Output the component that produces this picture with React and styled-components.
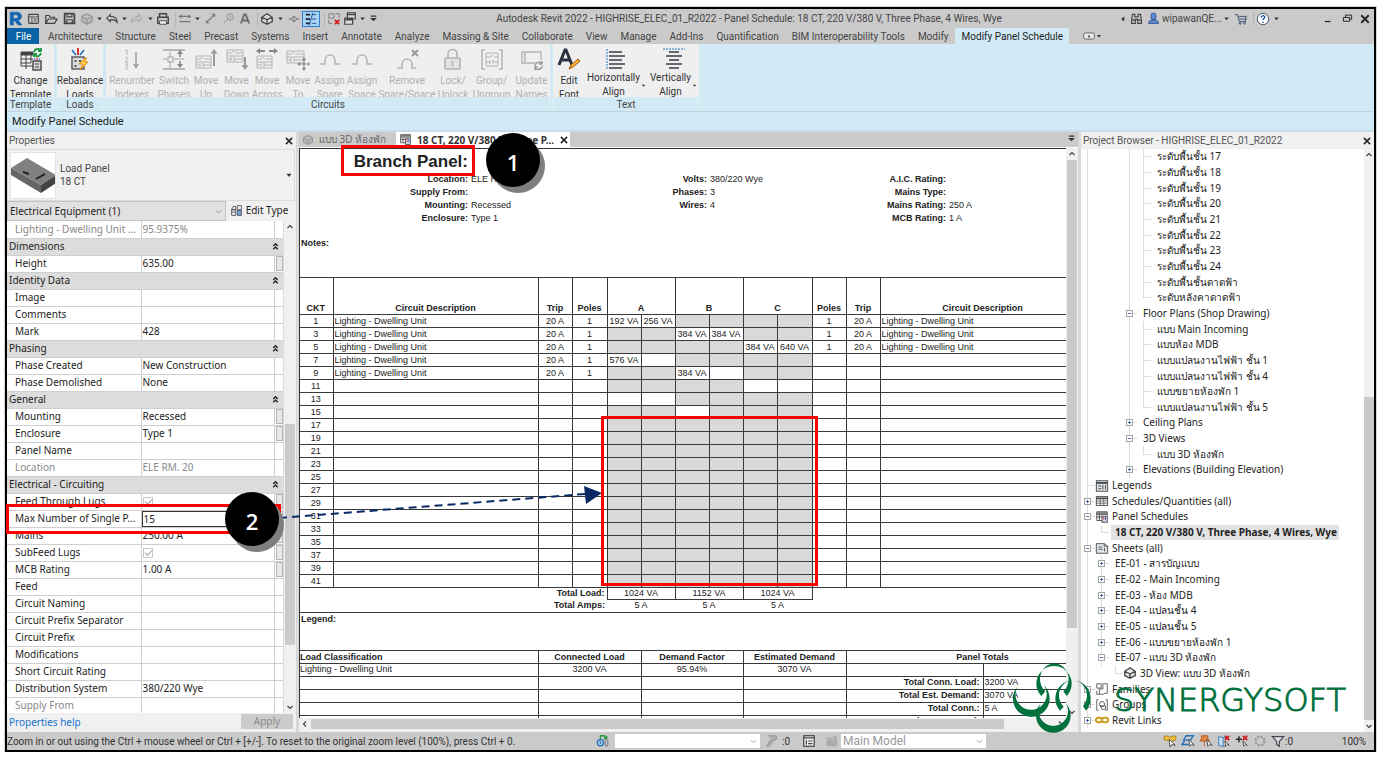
import { useState } from "react";
import styled, { createGlobalStyle } from "styled-components";

const uiFont = `"Noto Sans", "Open Sans", sans-serif`;
const chromeFont = `Roboto, "Noto Sans", sans-serif`;
const sheetFont = `"Liberation Sans", Arial, sans-serif`;

const GlobalStyle = createGlobalStyle`
  * {
    box-sizing: border-box;
  }
  body {
    margin: 0;
    background-color: #fff;
    font-family: ${uiFont};
    font-size: 10px;
    color: #222;
  }
  button, input, select {
    font: inherit;
    color: inherit;
    margin: 0;
    padding: 0;
    border: 0;
    background: none;
    border-radius: 0;
  }
  table {
    border-collapse: collapse;
    border-spacing: 0;
  }
  svg {
    flex: none;
  }
`;

const Frame = styled.div`
  position: relative;
  height: calc(100vh - 15px);
  margin: 7px 10px 0 5px;
  border: 2px solid #000;
  box-shadow: 0 0 0 1px #d4d4d4;
  display: flex;
  flex-direction: column;
  background-color: #f0f0f0;
`;

/* title bar */

const TitleBar = styled.header`
  height: 19px;
  display: flex;
  align-items: center;
  background-color: #cacaca;
  color: #444;
  font-family: ${chromeFont};
`;

const Slot = styled.button`
  width: ${(props) => props.$w}px;
  height: 17px;
  display: flex;
  align-items: center;
  justify-content: center;
  ${(props) =>
    props.$active &&
    "background-color: #a9d3f5; border: 1px solid #2f7fd0; height: 16px;"}
`;

const Separator = styled.span`
  width: 5px;
  height: 14px;
  border-right: 1px solid #b4b4b4;
`;

const WindowTitle = styled.div`
  flex: 1;
  text-align: center;
  white-space: nowrap;
  overflow: hidden;
`;

const UserName = styled.span`
  width: 58px;
  font-size: 10px;
`;

const TitleRight = styled.div`
  display: flex;
  align-items: center;
`;

const WindowButtons = styled.div`
  display: flex;
  margin-left: 38px;
`;

/* ribbon */

const TabRow = styled.nav`
  height: 16px;
  display: flex;
  background-color: #cacaca;
  color: #444;
  font-family: ${chromeFont};
`;

const RibbonTab = styled.button`
  height: 16px;
  padding: 0 6px 0 7px;
  line-height: 17px;
  white-space: nowrap;
  ${(props) => props.$active && "background-color: #d1eaf6; color: #222;"}
`;

const FileTab = styled(RibbonTab)`
  width: 32px;
  margin-right: 2px;
  background-color: #0a63a6;
  color: #fff;
`;

const MiniTab = styled(RibbonTab)`
  padding: 0 14px;
  display: flex;
  align-items: center;
`;

const Ribbon = styled.div`
  height: 68px;
  display: flex;
  gap: 3px;
  background-color: #d1eaf6;
  border-bottom: 1px solid #c4d3da;
  font-family: ${chromeFont};
`;

const Group = styled.section`
  display: flex;
  flex-direction: column;
`;

const GroupButtons = styled.div`
  height: 53px;
  display: flex;
  background-color: #efefef;
  overflow: hidden;
`;

const GroupTitle = styled.div`
  height: 14px;
  line-height: 16px;
  text-align: center;
  color: #444;
  border-left: 1px solid #dfeff6;
  border-right: 1px solid #dfeff6;
`;

const RibbonBtn = styled.button`
  width: ${(props) => props.$w}px;
  display: flex;
  flex-direction: column;
  align-items: center;
  padding-top: 3px;
  color: ${(props) => (props.$off ? "#b0b0b0" : "#333")};
`;

const LabelRow = styled.span`
  display: flex;
  align-items: center;
  margin-top: ${(props) => (props.$high ? 0 : 3)}px;
`;

const BtnLabel = styled.span`
  display: block;
  line-height: 14px;
  white-space: pre;
  text-align: center;
`;

const ContextBar = styled.div`
  height: 20px;
  padding-left: 5px;
  line-height: 20px;
  font-family: ${chromeFont};
  font-size: 11px;
  background-color: #d1eaf6;
  border-bottom: 2px solid #c6dde8;
`;

/* work area */

const Work = styled.main`
  flex: 1;
  min-height: 0;
  display: flex;
  background-color: #d8d8d8;
`;

const PropertiesPanel = styled.aside`
  width: 289px;
  display: flex;
  flex-direction: column;
  background-color: #f0f0f0;
`;

const PanelHeader = styled.div`
  height: 17px;
  padding: 0 2px;
  display: flex;
  align-items: center;
  justify-content: space-between;
  background-color: #f0f0f0;
  color: #555;
  font-family: ${chromeFont};
`;

const CloseBtn = styled.button`
  width: 10px;
  height: 10px;
  display: flex;
  align-items: center;
  justify-content: center;
`;

const TypeBox = styled.div`
  height: 52px;
  margin-right: 1px;
  padding: 1px 0 1px 2px;
  display: flex;
  align-items: center;
  border: 1px solid #dcdcdc;
  color: #444;
  font-family: ${chromeFont};
`;

const Preview = styled.div`
  width: 46px;
  height: 47px;
  margin-right: 4px;
  background-color: #fff;
  border: 1px solid #e4e4e4;
`;

const TypeNames = styled.div`
  flex: 1;
  line-height: 13px;
`;

const FilterRow = styled.div`
  height: 20px;
  display: flex;
`;

const SelectBox = styled.label`
  position: relative;
  display: flex;
  align-items: center;
  width: ${(props) => props.$w}px;
  height: ${(props) => props.$h}px;
  background-color: ${(props) => props.$bg};
  border: ${(props) => (props.$border ? "1px solid #c4c4c4" : "0")};
  color: ${(props) => props.$color || "#222"};
  select {
    width: 100%;
    height: 100%;
    padding-left: 2px;
    appearance: none;
    font-size: ${(props) => props.$size || 10}px;
  }
  svg {
    position: absolute;
    right: 3px;
    pointer-events: none;
  }
`;

const EditType = styled.button`
  flex: 1;
  display: flex;
  align-items: center;
  justify-content: center;
  gap: 3px;
  padding: 0 4px 2px 0;
  font-size: 10px;
`;

const PropertyArea = styled.div`
  flex: 1;
  min-height: 0;
  display: flex;
`;

const PropertyScroll = styled.div`
  flex: 1;
  overflow: hidden;
  background-color: #fff;
  border-right: 1px solid #dcdcdc;
`;

const PropertyTable = styled.table`
  width: 100%;
  table-layout: fixed;
  tr {
    height: 17px;
  }
  td,
  th {
    padding: 0;
    height: 17px;
    line-height: 15px;
    font-weight: 400;
    text-align: left;
    white-space: nowrap;
    overflow: hidden;
    border-bottom: 1px solid #cfcfcf;
  }
`;

const GroupCell = styled.th`
  background-color: #dcdcdc;
  button {
    width: 100%;
    padding: 0 3px 0 2px;
    display: flex;
    align-items: center;
    justify-content: space-between;
  }
`;

const NameCell = styled.th`
  && {
    padding-left: 8px;
    border-right: 1px solid #cfcfcf;
    color: ${(props) => (props.$off ? "#888" : "#222")};
  }
`;

const ValueCell = styled.td`
  && {
    padding-left: 1px;
    border-right: 1px solid #cfcfcf;
    color: ${(props) => (props.$off ? "#888" : "#222")};
  }
`;

const ValueInput = styled.input`
  display: block;
  width: 100%;
  height: 16px;
  margin-left: -1px;
  padding-left: 1px;
  border: 1px solid #333;
`;

const Tick = styled.input`
  display: block;
  appearance: none;
  width: 10px;
  height: 10px;
  border: 1px solid #c8c8c8;
  &::after {
    content: "";
    display: block;
    width: 6px;
    height: 3px;
    margin: 1px;
    border: solid #aaa;
    border-width: 0 0 1px 1px;
    transform: rotate(-45deg);
  }
`;

const AssociateBtn = styled.button`
  display: block;
  width: 7px;
  height: 15px;
  margin-left: 1px;
  background-color: #e8e8e8;
  border: 1px solid #b4b4b4;
`;

const PropertyFooter = styled.div`
  height: 19px;
  padding: 0 3px 2px 2px;
  display: flex;
  align-items: center;
  justify-content: space-between;
  a {
    color: #1a72cf;
    text-decoration: none;
  }
  button {
    width: 52px;
    height: 15px;
    line-height: 15px;
    background-color: #cccccc;
    color: #8a8a8a;
  }
`;

const VScroll = styled.div`
  width: ${(props) => props.$w}px;
  display: flex;
  flex-direction: column;
  align-items: center;
  background-color: #f0f0f0;
`;

const HScroll = styled.div`
  height: 14px;
  padding: 0 12px 2px 0;
  display: flex;
  align-items: center;
  background-color: #f0f0f0;
`;

const Arrow = styled.button`
  width: 12px;
  height: 12px;
  flex: none;
  display: flex;
  align-items: center;
  justify-content: center;
`;

const Track = styled.div`
  flex: ${(props) => props.$part} 0 0;
  align-self: stretch;
  margin: ${(props) => props.$margin || 0};
  background-color: ${(props) => (props.$thumb ? "#cacaca" : "#f0f0f0")};
`;

/* schedule view */

const View = styled.section`
  flex: 1;
  min-width: 0;
  margin: 0 3px;
  display: flex;
  flex-direction: column;
  background-color: #f0f0f0;
`;

const DocTabs = styled.div`
  height: 16px;
  display: flex;
  background-color: #cacaca;
  border-bottom: 1px solid #fff;
`;

const DocTab = styled.button`
  width: ${(props) => props.$w}px;
  padding: 0 3px;
  display: flex;
  align-items: center;
  gap: 5px;
  white-space: nowrap;
  color: ${(props) => (props.$active ? "#333" : "#666")};
  font-weight: ${(props) => (props.$active ? 700 : 400)};
  background-color: ${(props) => (props.$active ? "#fff" : "transparent")};
`;

const DocMenu = styled.button`
  width: 14px;
  margin-left: auto;
`;

const SheetRow = styled.div`
  flex: 1;
  min-height: 0;
  display: flex;
`;

const SheetScroll = styled.div`
  flex: 1;
  min-width: 0;
  overflow: hidden;
  background-color: #fff;
  border-top: 1px solid #333;
  border-left: 1px solid #333;
  font-family: ${sheetFont};
  font-size: 9px;
`;

const Sheet = styled.div`
  width: 820px;
  margin-left: -1px;
`;

const SheetHead = styled.div`
  height: 128px;
`;

const SheetTitle = styled.h1`
  width: 169px;
  height: 24px;
  margin: 0;
  line-height: 25px;
  font-size: 17px;
  text-align: right;
`;

const FactColumns = styled.div`
  height: 64px;
  display: grid;
  grid-template-columns: repeat(3, 239px);
`;

const Facts = styled.dl`
  margin: 0;
  display: grid;
  grid-template-columns: 169px 1fr;
  grid-auto-rows: 13px;
  column-gap: 3px;
  line-height: 13px;
  dt {
    font-weight: 700;
    text-align: right;
  }
  dd {
    margin: 0;
  }
`;

const SheetNote = styled.div`
  height: ${(props) => props.$h}px;
  padding-left: 2px;
  line-height: 13px;
  font-weight: 700;
`;

const GridTable = styled.table`
  width: 820px;
  table-layout: fixed;
  line-height: 11px;
  tr {
    height: 13px;
  }
  th,
  td {
    height: 13px;
    padding: 0;
    border: 1px solid #3a3a3a;
    border-left-color: #222;
    white-space: nowrap;
    overflow: hidden;
    text-align: center;
  }
  tr > :first-child {
    border-left: 0;
  }
  th {
    vertical-align: bottom;
  }
`;

const CircuitTable = styled(GridTable)`
  thead th {
    height: 37px;
  }
  tfoot tr,
  tfoot td,
  tfoot th {
    height: 12px;
  }
  tfoot td,
  tfoot th {
    border: 0;
  }
  tfoot th {
    padding-right: 2px;
    text-align: right;
    vertical-align: middle;
  }
  tfoot tr:first-child td {
    border: 1px solid #3a3a3a;
  }
`;

const TextCell = styled.td`
  && {
    padding-left: 1px;
    text-align: left;
  }
`;

const LoadCell = styled.td`
  && {
    background-color: ${(props) => (props.$shaded ? "#d9d9d9" : "#fff")};
  }
`;

const TotalLabel = styled.th`
  && {
    padding-right: 3px;
    text-align: right;
    vertical-align: middle;
  }
`;

const LegendBox = styled(SheetNote)`
  border-top: 1px solid #3a3a3a;
`;

/* project browser */

const Browser = styled.aside`
  width: 293px;
  display: flex;
  flex-direction: column;
  background-color: #fff;
`;

const BrowserBody = styled.div`
  flex: 1;
  min-height: 0;
  display: flex;
`;

const Tree = styled.ul`
  flex: 1;
  min-width: 0;
  margin: 0;
  padding: 0 0 4px;
  list-style: none;
  display: flex;
  flex-direction: column;
  overflow: hidden;
`;

const TreeRow = styled.li`
  flex: 1;
  min-height: 0;
  display: flex;
  align-items: center;
  white-space: nowrap;
`;

const guides = {
  " ": "none",
  "|": "linear-gradient(#ddd, #ddd) 6px 0 / 1px 100% no-repeat",
  T: "linear-gradient(#ddd, #ddd) 6px 0 / 1px 100% no-repeat, linear-gradient(#ddd, #ddd) 6px 50% / 8px 1px no-repeat",
  L: "linear-gradient(#ddd, #ddd) 6px 0 / 1px 50% no-repeat, linear-gradient(#ddd, #ddd) 6px 50% / 8px 1px no-repeat",
};

const Guide = styled.span`
  width: 14px;
  height: 100%;
  flex: none;
  display: flex;
  align-items: center;
  padding-left: 3px;
  background: ${(props) => guides[props.$kind] || guides.T};
`;

const Expander = styled.button`
  width: 7px;
  height: 7px;
  display: flex;
  background-color: #fff;
  border: 1px solid #a4a4a4;
`;

const TreeLabel = styled.span`
  height: 15px;
  line-height: 15px;
  padding: 0 2px 0 ${(props) => (props.$icon ? 3 : 4)}px;
  margin-left: ${(props) => (props.$icon ? 0 : 2)}px;
  font-weight: ${(props) => (props.$active ? 700 : 400)};
  background-color: ${(props) => (props.$active ? "#e2e2e2" : "transparent")};
`;

/* status bar */

const StatusBar = styled.footer`
  height: 18px;
  padding: 0 8px 0 0;
  display: flex;
  align-items: center;
  background-color: #cacaca;
  color: #333;
  font-family: ${chromeFont};
`;

const StatusText = styled.div`
  width: 589px;
  overflow: hidden;
  white-space: nowrap;
`;

const StatusIcons = styled.div`
  margin-left: auto;
  display: flex;
  align-items: center;
  gap: 4px;
`;

const ZoomLevel = styled.span`
  width: 73px;
  text-align: right;
`;

const Item = styled.span`
  display: flex;
  align-items: center;
  margin: 0 ${(props) => props.$gap}px;
`;

/* callouts that lie over the window */

const RedBox = styled.div`
  position: absolute;
  left: ${(props) => props.$x}px;
  top: ${(props) => props.$y}px;
  width: ${(props) => props.$w}px;
  height: ${(props) => props.$h}px;
  border: 3px solid #fe0000;
  pointer-events: none;
`;

const StepBadge = styled.div`
  position: absolute;
  left: ${(props) => props.$x}px;
  top: ${(props) => props.$y}px;
  width: 54px;
  height: 54px;
  border-radius: 50%;
  background-color: #000;
  box-shadow: 5px 6px 0 #7f7f7f;
  color: #fff;
  font-family: "Open Sans", sans-serif;
  font-size: 22px;
  font-weight: 600;
  line-height: 58px;
  text-align: center;
`;

const ArrowDrawing = styled.svg`
  position: absolute;
  left: 272px;
  top: 472px;
  pointer-events: none;
`;

const Brand = styled.div`
  position: absolute;
  right: 28px;
  bottom: 10px;
  width: 336px;
  display: flex;
  align-items: center;
  justify-content: space-between;
  pointer-events: none;
  color: #00703c;
  font-family: "DejaVu Sans", sans-serif;
  font-weight: 200;
  font-size: 32px;
  line-height: 32px;
  -webkit-text-stroke: 1px #00703c;
`;

/* icons */

const shapes = {
  revit: (
    <path d="M3 2h6c6 0 6 7 1.500 7.500L14 14h-3.500L7 10H6v4H3zM6 4.500V8h2.500c2.500 0 2.500-3.500 0-3.500z" fill="#1565b0" stroke="#1565b0" strokeWidth="0.600" fillRule="evenodd" />
  ),
  home: (
    <g>
      <rect x="2" y="3" width="12" height="11" rx="1" strokeWidth="1.400" />
      <path d="M2 6h12M6 6v8M8 8.500h4M8 11h4" />
    </g>
  ),
  open: <path d="M2 13V4h4l1 2h5v2M2 13l3-5h10l-3 5z" strokeWidth="1.400" />,
  save: (
    <g>
      <path d="M2 2h11l1 1v11H2z" strokeWidth="2.200" />
      <path d="M5 2v4h6V2M4.500 14V9.500h7V14" strokeWidth="1.400" />
    </g>
  ),
  cube: (
    <path d="M8 2l6 3v6l-6 3-6-3V5zM2 5l6 3 6-3M8 8v6" stroke="#888" fill="#b5b5b5" />
  ),
  undo: <path d="M6 3L2 7l4 4V9c4-1 6 0 8 3 0-5-3-7-8-7z" strokeWidth="1.200" />,
  redo: <path d="M10 3l4 4-4 4V9c-4-1-6 0-8 3 0-5 3-7 8-7z" stroke="#999" />,
  print: (
    <g>
      <path d="M4 6V2h8v4M4 13H2V6h12v7h-2" strokeWidth="1.600" />
      <path d="M4 10h8v4H4z" fill="#eee" />
    </g>
  ),
  dim: <path d="M2 5h12M2 11h12M4 3.500L2 5l2 1.500M12 3.500L14 5l-2 1.500" stroke="#777" strokeWidth="1.600" />,
  measure: <path d="M3 13L13 3M10 3h3v3M3 10v3h3" stroke="#777" strokeWidth="1.400" />,
  tag: (
    <g stroke="#888">
      <circle cx="10" cy="6" r="4" />
      <path d="M7 9l-5 5M10 4v4" />
    </g>
  ),
  letter: <path d="M2.500 14L7 2h2l4.500 12M4.500 10h7" stroke="#6a6a6a" strokeWidth="2.400" />,
  house: <path d="M8 2l6 4v5l-6 3-6-3V6zM2 6l6 3 6-3M8 9v5" strokeWidth="1.500" fill="#ddd" />,
  section: <path d="M1 8h3M12 8h3M8 4l4 4-4 4-4-4zM8 4v8" stroke="#777" strokeWidth="1.300" />,
  thin: (
    <g strokeWidth="2">
      <path d="M2 3h5M2 8h5M2 13h5" stroke="#223" />
      <path d="M9 3h5M9 8h5M9 13h5M10 1L6 15" stroke="#1c4f8a" strokeWidth="1" />
    </g>
  ),
  closeWin: (
    <g>
      <path d="M2 2h6v5H2zM10 2h4v5M2 9v4h4" stroke="#777" />
      <path d="M9 9l5 5M14 9l-5 5" stroke="#d01818" strokeWidth="2" />
    </g>
  ),
  switchWin: <path d="M5 1h9v7H5zM5 3h9M2 7h9v7H2zM2 9h9" strokeWidth="1.400" fill="#ddd" />,
  caret: <path d="M4 6h8l-4 5z" fill="#333" stroke="none" />,
  menu: <path d="M4 4.500h8M5 8h6l-3 3z" fill="#333" stroke="#333" strokeWidth="1.600" />,
  leftTri: <path d="M10 4v8L5 8z" fill="#333" stroke="none" />,
  binoculars: (
    <path d="M3 3h3v3h4V3h3l1 7v4H9.500V9h-3v5H2v-4zM2 10h4.500M9.500 10H14" strokeWidth="1.400" />
  ),
  user: (
    <g fill="#5b8bd8" stroke="#24467f">
      <rect x="5" y="1.500" width="6" height="8" rx="2.500" />
      <path d="M2 14c0-3 2-4 4-4h4c2 0 4 1 4 4z" />
    </g>
  ),
  cart: (
    <g stroke="#34456a">
      <path d="M1 3h3l2 8h7l1-6H5M6 8h8" />
      <circle cx="7" cy="13" r="1" />
      <circle cx="12" cy="13" r="1" />
    </g>
  ),
  help: (
    <g>
      <circle cx="8" cy="8" r="6.500" fill="#fff" stroke="#345" />
      <path d="M6 6.500c0-3 4-3 4-.5 0 1.500-2 1.500-2 3M8 11v1.500" stroke="#1d4fa0" strokeWidth="1.600" />
    </g>
  ),
  minimise: <path d="M3 12h9" stroke="#222" strokeWidth="2" />,
  restore: <path d="M5 6V3h9v6h-3M2 6.500h9V12H2z" stroke="#222" strokeWidth="1.400" />,
  cross: <path d="M3 3l10 10M13 3L3 13" stroke="#222" strokeWidth="2.400" />,
  expand: (
    <g>
      <rect x="1" y="4" width="14" height="8" rx="2" fill="#eee" />
      <path d="M6 9.500h4L8 6.500z" fill="#333" stroke="none" />
    </g>
  ),
  up: <path d="M3 10l5-5 5 5" stroke="#444" strokeWidth="2.400" />,
  down: <path d="M3 6l5 5 5-5" stroke="#444" strokeWidth="2.400" />,
  left: <path d="M10 3L5 8l5 5" stroke="#444" strokeWidth="2.400" />,
  right: <path d="M6 3l5 5-5 5" stroke="#444" strokeWidth="2.400" />,
  chevron: <path d="M2 5l6 6 6-6" stroke="#888" strokeWidth="1.800" />,
  collapse: <path d="M4 7l4-4 4 4M4 13l4-4 4 4" stroke="#222" strokeWidth="2.400" />,
  plus: <path d="M3 8h10M8 3v10" stroke="#2b4d9b" strokeWidth="2.600" />,
  minus: <path d="M3 8h10" stroke="#2b4d9b" strokeWidth="2.600" />,
  editType: (
    <g stroke="#445">
      <path d="M2 7l2-4h3v4zM2 7h5v7H2zM9 2h5v5H9zM2 10h5" />
      <path d="M9 8h5v6H9z" fill="#7ca6dc" />
    </g>
  ),
  panel: (
    <g stroke="#444">
      <path d="M2 2h12v4M2 2v10h6M2 5h12M5 5v7M2 8h6" />
      <path d="M2 3.500h12" stroke="#777" strokeWidth="2" />
      <rect x="8" y="7" width="6" height="7" fill="#c9d6ee" />
      <path d="M10 8v3" stroke="#d33" />
      <path d="M12 8v3" stroke="#24b" />
    </g>
  ),
  legend: (
    <g stroke="#444">
      <rect x="1.500" y="2" width="13" height="12" fill="#d8dee4" />
      <path d="M1.500 4.500h13" strokeWidth="2" />
      <path d="M4 8h3M4 11h3M9 7v5M12 7v5" />
    </g>
  ),
  schedule: (
    <g stroke="#444">
      <rect x="1.500" y="3" width="13" height="10" />
      <path d="M1.500 5h13" strokeWidth="2" />
      <path d="M1.500 8h13M1.500 10.500h13M6 5v8M10 5v8" strokeWidth="0.800" />
    </g>
  ),
  sheet: (
    <g stroke="#444">
      <path d="M1.500 3h9l4 3v8h-13zM10.500 3v3h4" fill="#e2e6ea" />
      <path d="M4 7h4M4 9.500h5M11 8v4" />
    </g>
  ),
  family: <path d="M2 2h5v5H2zM9 2h5v11h-4M9 2v6H5v6M2 10v4h8" stroke="#555" />,
  groups: (
    <g stroke="#555">
      <path d="M4 2H2v12h2M12 2h2v12h-2" />
      <circle cx="8" cy="7" r="3" />
      <path d="M6 9h6v4H8z" />
    </g>
  ),
  link: (
    <g stroke="#d19a1a" strokeWidth="2.200">
      <rect x="1" y="5.500" width="7" height="5" rx="2.500" />
      <rect x="8" y="5.500" width="7" height="5" rx="2.500" />
    </g>
  ),
  workset: (
    <g strokeWidth="1.600">
      <path d="M5 6V2h5v4" stroke="#2f9a3b" />
      <circle cx="5" cy="10" r="3.500" stroke="#2673b8" fill="#cfe2f4" />
      <path d="M3.500 10h3M5 8.500v3" stroke="#2673b8" strokeWidth="1" />
      <rect x="10.500" y="6" width="3" height="8" rx="1.500" stroke="#667" strokeWidth="1" />
      <path d="M10 4l3-1M11 6l2-3" stroke="#2f9a3b" />
    </g>
  ),
  brush: <path d="M4 2h9v4l-3 1-5 7H2l4-7" stroke="#8f8f8f" fill="#b0b0b0" />,
  options: (
    <g strokeWidth="1.400">
      <rect x="2" y="2" width="12" height="12" fill="#eee" />
      <path d="M2 4.500h12M5 7v5M7 8h5M7 11h5" />
    </g>
  ),
  optionsOff: (
    <g stroke="#999">
      <path d="M2 3h12v11H2z" fill="#b2b2b2" stroke="none" />
      <path d="M10 2h4v11M3 8h5M3 11h6l2 3" />
    </g>
  ),
  selLink: (
    <g>
      <path d="M1 3l3-1 4 2 4-2 3 1-1 4-4 1-4-1-4 0z" fill="#f0c23c" stroke="#a87b12" />
      <path d="M7 6l1 9 2-3 4 1z" fill="#fff" stroke="#444" />
    </g>
  ),
  selUnder: (
    <g>
      <path d="M6 2h8l-3 5H3zM4 8l-3 4h8" stroke="#2673b8" strokeWidth="1.600" />
      <path d="M9 6l1 8 2-2 3 1z" fill="#fff" stroke="#444" />
    </g>
  ),
  selPin: (
    <g>
      <path d="M3 2h7v3l2 3H1l2-3zM6 8v6" fill="#e58545" stroke="#b4501c" />
      <path d="M9 6l1 8 2-2 3 1z" fill="#fff" stroke="#444" />
    </g>
  ),
  selFace: (
    <g>
      <path d="M2 3l5 1v10l-5-1zM7 4h3M7 14h3" stroke="#2673b8" fill="#cfe2f4" />
      <path d="M9 2l5 5M14 2L9 7" stroke="#d01818" strokeWidth="2" />
      <path d="M9 8l1 6 2-2 2 1z" fill="#fff" stroke="#444" />
    </g>
  ),
  selDrag: (
    <g>
      <path d="M1 6h7M4.500 2.500v7" stroke="#333" strokeWidth="1.800" />
      <path d="M9 2l5 5M14 2L9 7" stroke="#d01818" strokeWidth="2" />
      <path d="M9 8l1 6 2-2 2 1z" fill="#fff" stroke="#444" />
    </g>
  ),
  gear: <circle cx="8" cy="8" r="5" stroke="#999" strokeWidth="2.600" strokeDasharray="2.500 1.400" />,
  funnel: <path d="M1.500 3h13L9.500 8.500V14l-3-2V8.500z" stroke="#445" fill="#e4e4e4" strokeWidth="1.400" />,
};

function Icon({ name, size = 14 }) {
  return (
    <svg width={size} height={size} viewBox="0 0 16 16" fill="none" stroke="#444" aria-hidden="true">
      {shapes[name]}
    </svg>
  );
}

const miniRack = (
  <g>
    <path d="M2 8h15v12H2zM2 14h15" />
    <path d="M2 11h4l3-2M10 11h7M2 17h4M6 15v4M9 15v4M9 17h8" />
  </g>
);

const ribbonShapes = {
  template: (
    <g stroke="#444">
      <path d="M2 4h12v3H2z" fill="#444" />
      <path d="M2 7v11h12M7 7v14M12 7v8M2 11h12M2 15h10" />
      <rect x="14" y="13" width="8" height="9" fill="#d6d6d6" strokeWidth="1.400" />
      <path d="M16 16h4M16 19h4" />
      <path d="M15 10l2 3M21 10l-2 3" stroke="#1d70c8" />
      <path d="M18 9v4" stroke="#e01f1f" />
      <path d="M15 4c1-4 6-4 7-1M22 5c-1 4-6 4-7 1M22 0v3h-3M15 9V6h3" stroke="#1f9a45" strokeWidth="1.800" />
    </g>
  ),
  rebalance: (
    <g>
      <rect x="4" y="9" width="12" height="12" fill="#dcdcdc" stroke="#555" strokeWidth="1.400" />
      <path d="M6.500 12h2v2h-2zM11 12h2v2h-2zM6.500 17h2v2h-2z" fill="#555" stroke="none" />
      <path d="M4 2l4 5M16 2l-4 5" stroke="#1d70c8" strokeWidth="1.600" />
      <path d="M10 0v7" stroke="#e01f1f" strokeWidth="1.800" />
      <path d="M17 10l-6 6h4l-3 6 8-8h-4l3-4z" fill="#ffd24a" stroke="#e28a12" />
    </g>
  ),
  renumber: (
    <g>
      <path d="M5 3l2-1v5M5 10c3-2 4 1 0 4h3M5 16h3l-2 2.500c3 0 2 3-1 2.500" />
      <path d="M16 4v14" strokeWidth="1.600" stroke="#a4a4a4" />
      <path d="M13 16h6l-3 5z" fill="#a4a4a4" stroke="none" />
    </g>
  ),
  phases: (
    <g stroke="#a4a4a4">
      <path d="M1 2h22M1 21h22" strokeWidth="1.600" />
      <path d="M8 4v16M1 11h4M12 11h10" />
      <rect x="6" y="9" width="5" height="5" fill="#eee" />
      <path d="M18 4v5M18 13v6" stroke="#888" strokeWidth="1.600" />
      <path d="M15 6l3-4 3 4zM15 16l3 4 3-4z" fill="#888" stroke="none" />
    </g>
  ),
  up: (
    <g>
      {miniRack}
      <path d="M20 4v14" stroke="#999" strokeWidth="2" />
      <path d="M16.500 5.500L20 1l3.500 4.500z" fill="#999" stroke="none" />
    </g>
  ),
  down: (
    <g>
      <path d="M2 2h16v12H2zM2 8h16M2 5h4l3-2M10 5h8M2 11h4M6 9v4M9 9v4M9 11h9" />
      <path d="M20 9v9" stroke="#999" strokeWidth="2" />
      <path d="M16.500 17l3.500 5 3.500-5z" fill="#999" stroke="none" />
    </g>
  ),
  across: (
    <g>
      {miniRack}
      <path d="M3 3h7M14 3h7" stroke="#888" strokeWidth="1.800" />
      <path d="M5 0v6L1 3zM19 0v6l4-3z" fill="#888" stroke="none" />
    </g>
  ),
  to: (
    <g>
      <path d="M1 3h17v12H1zM1 9h17M1 6h4l3-2M9 6h9M1 12h4M5 10v4M8 10v4M8 12h9" />
      <path d="M18 11v10M13 16h10" stroke="#888" strokeWidth="1.200" />
      <path d="M16 12l2-3 2 3zM16 20l2 3 2-3zM14 14l-3 2 3 2zM22 14l2 2-2 2z" fill="#888" stroke="none" />
    </g>
  ),
  spare: <path d="M2 16h5v-3c0-8 10-8 10 0v3h5" strokeWidth="1.600" />,
  remove: (
    <g>
      <path d="M2 20h5v-3c0-8 10-8 10 0v3h4" strokeWidth="1.600" />
      <path d="M17 2l6 6M23 2l-6 6" stroke="#999" strokeWidth="2" />
    </g>
  ),
  lock: (
    <g strokeWidth="1.600">
      <rect x="4" y="10" width="15" height="11" rx="1" fill="#e2e2e2" />
      <path d="M7 10V6c0-6 9-6 9 0v4M11.500 13v5" />
    </g>
  ),
  group: (
    <g strokeWidth="1.500">
      <path d="M5 2H2v19h3M19 2h3v19h-3" />
      <path d="M6 5h12v13H6zM6 9h4l3-2M14 9h4M6 14h4M10 12v4M13 12v4M13 14h5" strokeWidth="1" />
    </g>
  ),
  update: (
    <g strokeWidth="1.400">
      <path d="M15 15H2V4h19v8M5 6v7M4 6h2M4 13h2" />
      <path d="M15 18c0-4 6-5 7-2M22 18c0 4-6 4-7 2M22 13v3h-3M15 22v-3h3" stroke="#999" />
    </g>
  ),
  font: (
    <g>
      <path d="M2 17L8 2h1l6 15M5 12h8" stroke="#2a3040" strokeWidth="3" />
      <path d="M12 21l2-4 7-6 2 2-7 6z" fill="#ffb52e" stroke="#a3560d" />
    </g>
  ),
  horizontal: (
    <g>
      <path d="M4 4h13M4 8h16M4 12h13M4 16h16M4 20h13" stroke="#666a70" strokeWidth="2" />
      <path d="M2 1v21" stroke="#2b7cc8" strokeDasharray="2 1" />
    </g>
  ),
  vertical: (
    <g>
      <path d="M7 4h10M4 8h16M7 12h10M4 16h16M7 20h10" stroke="#666a70" strokeWidth="2" />
      <path d="M1 1h22" stroke="#2b7cc8" strokeDasharray="2 1" />
    </g>
  ),
};

function RibbonIcon({ name }) {
  return (
    <svg width="24" height="24" viewBox="0 -1 24 24" fill="none" stroke="#b4b4b4" aria-hidden="true">
      {ribbonShapes[name]}
    </svg>
  );
}

/* data */

const quickAccess = [
  ["revit", 17, 17],
  ["home", 18, 13],
  ["open", 18, 14],
  ["save", 18, 13],
  ["cube", 17, 14],
  ["caret", 9, 9],
  ["undo", 16, 14],
  ["caret", 9, 9],
  ["redo", 16, 14],
  ["caret", 10, 9],
  ["print", 16, 14],
  null,
  ["dim", 17, 14],
  ["caret", 9, 9],
  ["measure", 17, 13],
  ["tag", 18, 13],
  ["letter", 16, 12],
  null,
  ["house", 18, 14],
  ["caret", 9, 9],
  ["section", 17, 12],
  ["thin", 18, 14],
  null,
  ["closeWin", 17, 14],
  ["switchWin", 16, 14],
  ["caret", 8, 9],
  ["menu", 14, 11],
];

const ribbonTabs = [
  "Architecture",
  "Structure",
  "Steel",
  "Precast",
  "Systems",
  "Insert",
  "Annotate",
  "Analyze",
  "Massing & Site",
  "Collaborate",
  "View",
  "Manage",
  "Add-Ins",
  "Quantification",
  "BIM Interoperability Tools",
  "Modify",
  "Modify Panel Schedule",
];

const ribbonGroups = [
  { title: "Template", buttons: [["template", "Change\nTemplate", 47]] },
  { title: "Loads", buttons: [["rebalance", "Rebalance\nLoads", 46]] },
  {
    title: "Circuits",
    off: true,
    buttons: [
      ["renumber", "Renumber\nIndexes", 52],
      ["phases", "Switch\nPhases", 32],
      ["up", "Move\nUp", 32],
      ["down", "Move\nDown", 29],
      ["across", "Move\nAcross", 32],
      ["to", "Move\nTo", 30],
      ["spare", "Assign\nSpare", 33],
      ["spare", "Assign\nSpace", 32],
      ["remove", "Remove\nSpare/Space", 58],
      ["lock", "Lock/\nUnlock", 34],
      ["group", "Group/\nUngroup", 43],
      ["update", "Update\nNames", 37],
    ],
  },
  {
    title: "Text",
    buttons: [
      ["font", "Edit\nFont", 32],
      ["horizontal", "Horizontally\nAlign", 64, true],
      ["vertical", "Vertically\nAlign", 50, true],
    ],
  },
];

// off = read only, assoc = has an associate button
const properties = [
  { name: "Lighting - Dwelling Unit ...", value: "95.9375%", off: true },
  { group: "Dimensions" },
  { name: "Height", value: "635.00", assoc: true },
  { group: "Identity Data" },
  { name: "Image" },
  { name: "Comments" },
  { name: "Mark", value: "428" },
  { group: "Phasing" },
  { name: "Phase Created", value: "New Construction" },
  { name: "Phase Demolished", value: "None" },
  { group: "General" },
  { name: "Mounting", value: "Recessed", assoc: true },
  { name: "Enclosure", value: "Type 1", assoc: true },
  { name: "Panel Name" },
  { name: "Location", value: "ELE RM. 20", off: true },
  { group: "Electrical - Circuiting" },
  { name: "Feed Through Lugs", check: true, assoc: true },
  { name: "Max Number of Single P...", value: "15", edit: true, assoc: true },
  { name: "Mains", value: "250.00 A", assoc: true },
  { name: "SubFeed Lugs", check: true, assoc: true },
  { name: "MCB Rating", value: "1.00 A", assoc: true },
  { name: "Feed" },
  { name: "Circuit Naming" },
  { name: "Circuit Prefix Separator" },
  { name: "Circuit Prefix" },
  { name: "Modifications" },
  { name: "Short Circuit Rating" },
  { name: "Distribution System", value: "380/220 Wye" },
  { name: "Supply From", off: true },
];

const facts = [
  [
    ["Location:", "ELE RM. 20"],
    ["Supply From:", ""],
    ["Mounting:", "Recessed"],
    ["Enclosure:", "Type 1"],
  ],
  [
    ["Volts:", "380/220 Wye"],
    ["Phases:", "3"],
    ["Wires:", "4"],
  ],
  [
    ["A.I.C. Rating:", ""],
    ["Mains Type:", ""],
    ["Mains Rating:", "250 A"],
    ["MCB Rating:", "1 A"],
  ],
];

const loads = [
  ["192 VA", "256 VA"],
  ["384 VA", "384 VA"],
  ["384 VA", "640 VA"],
  ["576 VA", ""],
  ["384 VA", ""],
];

const circuits = Array.from({ length: 21 }, (_, i) => ({
  ckt: i * 2 + 1,
  left: i < 5,
  right: i < 3,
  cells: [0, 1, 2, 3, 4, 5].map((c) => {
    const open = i < 8 && Math.floor(c / 2) === i % 3 && !(i === 7 && c === 3);
    return { shaded: !open, text: open && loads[i] ? loads[i][c % 2] : "" };
  }),
}));

const totals = [
  null,
  ["Total Conn. Load:", "3200 VA"],
  ["Total Est. Demand:", "3070 VA"],
  ["Total Conn.:", "5 A"],
  ["Total Est. Demand:", "5 A"],
];

// guide cells, label, icon
const tree = [
  ["|  |T", "ระดับพื้นชั้น 17"],
  ["|  |T", "ระดับพื้นชั้น 18"],
  ["|  |T", "ระดับพื้นชั้น 19"],
  ["|  |T", "ระดับพื้นชั้น 20"],
  ["|  |T", "ระดับพื้นชั้น 21"],
  ["|  |T", "ระดับพื้นชั้น 22"],
  ["|  |T", "ระดับพื้นชั้น 23"],
  ["|  |T", "ระดับพื้นชั้น 24"],
  ["|  |T", "ระดับพื้นชั้นดาดฟ้า"],
  ["|  |L", "ระดับหลังคาดาดฟ้า"],
  ["|  -", "Floor Plans (Shop Drawing)"],
  ["|  |T", "แบบ Main Incoming"],
  ["|  |T", "แบบห้อง MDB"],
  ["|  |T", "แบบแปลนงานไฟฟ้า ชั้น 1"],
  ["|  |T", "แบบแปลนงานไฟฟ้า ชั้น 4"],
  ["|  |T", "แบบขยายห้องพัก 1"],
  ["|  |L", "แบบแปลนงานไฟฟ้า ชั้น 5"],
  ["|  +", "Ceiling Plans"],
  ["|  -", "3D Views"],
  ["|  |L", "แบบ 3D ห้องพัก"],
  ["|  +", "Elevations (Building Elevation)"],
  ["T", "Legends", "legend"],
  ["+", "Schedules/Quantities (all)", "schedule"],
  ["-", "Panel Schedules", "panel"],
  ["|L", "18 CT, 220 V/380 V, Three Phase, 4 Wires, Wye"],
  ["-", "Sheets (all)", "sheet"],
  ["|+", "EE-01 - สารบัญแบบ"],
  ["|+", "EE-02 - Main Incoming"],
  ["|+", "EE-03 - ห้อง MDB"],
  ["|+", "EE-04 - แปลนชั้น 4"],
  ["|+", "EE-05 - แปลนชั้น 5"],
  ["|+", "EE-06 - แบบขยายห้องพัก 1"],
  ["|-", "EE-07 - แบบ 3D ห้องพัก"],
  ["| L", "3D View: แบบ 3D ห้องพัก", "house"],
  ["+", "Families", "family"],
  ["+", "Groups", "groups"],
  ["+", "Revit Links", "link"],
];

function Header() {
  return (
    <TitleBar>
      {quickAccess.map((item, i) =>
        item ? (
          <Slot key={i} $w={item[1]} $active={item[0] === "thin"} aria-label={item[0]}>
            <Icon name={item[0]} size={item[2]} />
          </Slot>
        ) : (
          <Separator key={i} />
        )
      )}
      <WindowTitle>
        Autodesk Revit 2022 - HIGHRISE_ELEC_01_R2022 - Panel Schedule: 18 CT, 220 V/380 V, Three
        Phase, 4 Wires, Wye
      </WindowTitle>
      <TitleRight>
        <Slot $w={10} aria-label="Collapse search">
          <Icon name="leftTri" size={10} />
        </Slot>
        <Slot $w={17} aria-label="Search">
          <Icon name="binoculars" size={13} />
        </Slot>
        <Slot $w={17} aria-label="Account">
          <Icon name="user" size={13} />
        </Slot>
        <UserName>wipawanQE...</UserName>
        <Slot $w={12} aria-label="Account menu">
          <Icon name="caret" size={9} />
        </Slot>
        <Slot $w={17} aria-label="Store">
          <Icon name="cart" size={14} />
        </Slot>
        <Separator />
        <Slot $w={18} aria-label="Help">
          <Icon name="help" size={14} />
        </Slot>
        <Slot $w={8} aria-label="Help menu">
          <Icon name="caret" size={9} />
        </Slot>
        <WindowButtons>
          <Slot $w={20} aria-label="Minimise">
            <Icon name="minimise" size={10} />
          </Slot>
          <Slot $w={18} aria-label="Restore">
            <Icon name="restore" size={11} />
          </Slot>
          <Slot $w={18} aria-label="Close">
            <Icon name="cross" size={12} />
          </Slot>
        </WindowButtons>
      </TitleRight>
    </TitleBar>
  );
}

function RibbonBar() {
  const [tab, setTab] = useState("Modify Panel Schedule");

  return (
    <>
      <TabRow>
        <FileTab>File</FileTab>
        {ribbonTabs.map((name) => (
          <RibbonTab key={name} $active={tab === name} onClick={() => setTab(name)}>
            {name}
          </RibbonTab>
        ))}
        <MiniTab aria-label="Ribbon display">
          <Icon name="expand" size={12} />
          <Icon name="caret" size={8} />
        </MiniTab>
      </TabRow>
      <Ribbon>
        {ribbonGroups.map((group) => (
          <Group key={group.title}>
            <GroupButtons>
              {group.buttons.map(([icon, label, width, high]) => (
                <RibbonBtn key={label} $w={width} $off={group.off} disabled={group.off}>
                  <RibbonIcon name={icon} />
                  <LabelRow $high={high}>
                    <BtnLabel>{label}</BtnLabel>
                    {high && <Icon name="caret" size={7} />}
                  </LabelRow>
                </RibbonBtn>
              ))}
            </GroupButtons>
            <GroupTitle>{group.title}</GroupTitle>
          </Group>
        ))}
      </Ribbon>
      <ContextBar>Modify Panel Schedule</ContextBar>
    </>
  );
}

function PropertyRow({ row }) {
  if (row.group) {
    return (
      <tr>
        <GroupCell colSpan={3}>
          <button>
            {row.group}
            <Icon name="collapse" size={9} />
          </button>
        </GroupCell>
      </tr>
    );
  }

  return (
    <tr>
      <NameCell scope="row" $off={row.off}>
        {row.name}
      </NameCell>
      <ValueCell $off={row.off}>
        {row.edit && <ValueInput aria-label={row.name} defaultValue={row.value} />}
        {row.check && <Tick type="checkbox" aria-label={row.name} defaultChecked disabled />}
        {!row.edit && row.value}
      </ValueCell>
      <td>{row.assoc && <AssociateBtn aria-label={`Associate ${row.name}`} />}</td>
    </tr>
  );
}

function Properties() {
  return (
    <PropertiesPanel>
      <PanelHeader>
        Properties
        <CloseBtn aria-label="Close properties">
          <Icon name="cross" size={10} />
        </CloseBtn>
      </PanelHeader>
      <TypeBox>
        <Preview>
          <svg width="44" height="45" viewBox="0 0 44 45" aria-hidden="true">
            <path d="M0 15L16 5l29 17-15 10z" fill="#808080" />
            <path d="M0 15l30 17v8L0 22z" fill="#666" />
            <path d="M30 32l15-10v8L30 40z" fill="#444" />
            <path d="M25 26l9-5M12 19l6 2" stroke="#222" strokeWidth="2" />
          </svg>
        </Preview>
        <TypeNames>
          Load Panel
          <br />
          18 CT
        </TypeNames>
        <Slot $w={10} aria-label="Type selector">
          <Icon name="caret" size={10} />
        </Slot>
      </TypeBox>
      <FilterRow>
        <SelectBox $w={219} $h={20} $bg="#e1e1e1" $border>
          <select aria-label="Category filter">
            <option>Electrical Equipment (1)</option>
          </select>
          <Icon name="chevron" size={7} />
        </SelectBox>
        <EditType>
          <Icon name="editType" size={13} />
          Edit Type
        </EditType>
      </FilterRow>
      <PropertyArea>
        <PropertyScroll>
          <PropertyTable>
            <colgroup>
              <col width="134" />
              <col width="133" />
              <col />
            </colgroup>
            <tbody>
              {properties.map((row) => (
                <PropertyRow key={row.name || row.group} row={row} />
              ))}
            </tbody>
          </PropertyTable>
        </PropertyScroll>
        <VScroll $w={12}>
          <Arrow aria-label="Scroll up">
            <Icon name="up" size={8} />
          </Arrow>
          <Track $part={191} />
          <Track $part={220} $thumb $margin="0 1px" />
          <Track $part={56} />
          <Arrow aria-label="Scroll down">
            <Icon name="down" size={8} />
          </Arrow>
        </VScroll>
      </PropertyArea>
      <PropertyFooter>
        <a href="#help">Properties help</a>
        <button disabled>Apply</button>
      </PropertyFooter>
    </PropertiesPanel>
  );
}

function CircuitGrid() {
  return (
    <CircuitTable>
      <colgroup>
        {[34, 205, 34, 35, 34, 34, 34, 34, 34, 35, 34, 34, 205, 34].map((w, i) => (
          <col key={i} width={w} />
        ))}
      </colgroup>
      <thead>
        <tr>
          <th>CKT</th>
          <th>Circuit Description</th>
          <th>Trip</th>
          <th>Poles</th>
          <th colSpan={2}>A</th>
          <th colSpan={2}>B</th>
          <th colSpan={2}>C</th>
          <th>Poles</th>
          <th>Trip</th>
          <th>Circuit Description</th>
          <th>CKT</th>
        </tr>
      </thead>
      <tbody>
        {circuits.map((row) => (
          <tr key={row.ckt}>
            <td>{row.ckt}</td>
            <TextCell>{row.left && "Lighting - Dwelling Unit"}</TextCell>
            <td>{row.left && "20 A"}</td>
            <td>{row.left && "1"}</td>
            {row.cells.map((cell, i) => (
              <LoadCell key={i} $shaded={cell.shaded}>
                {cell.text}
              </LoadCell>
            ))}
            <td>{row.right && "1"}</td>
            <td>{row.right && "20 A"}</td>
            <TextCell>{row.right && "Lighting - Dwelling Unit"}</TextCell>
            <td>{row.ckt + 1}</td>
          </tr>
        ))}
      </tbody>
      <tfoot>
        <tr>
          <th colSpan={4}>Total Load:</th>
          <td colSpan={2}>1024 VA</td>
          <td colSpan={2}>1152 VA</td>
          <td colSpan={2}>1024 VA</td>
        </tr>
        <tr>
          <th colSpan={4}>Total Amps:</th>
          <td colSpan={2}>5 A</td>
          <td colSpan={2}>5 A</td>
          <td colSpan={2}>5 A</td>
        </tr>
      </tfoot>
    </CircuitTable>
  );
}

function LoadGrid() {
  return (
    <GridTable>
      <colgroup>
        {[239, 103, 102, 103, 137, 136].map((w, i) => (
          <col key={i} width={w} />
        ))}
      </colgroup>
      <thead>
        <tr>
          <TextCell as="th">Load Classification</TextCell>
          <th>Connected Load</th>
          <th>Demand Factor</th>
          <th>Estimated Demand</th>
          <th colSpan={2}>Panel Totals</th>
        </tr>
      </thead>
      <tbody>
        {totals.map((total, i) => (
          <tr key={i}>
            <TextCell>{i === 0 && "Lighting - Dwelling Unit"}</TextCell>
            <td>{i === 0 && "3200 VA"}</td>
            <td>{i === 0 && "95.94%"}</td>
            <td>{i === 0 && "3070 VA"}</td>
            <TotalLabel>{total && total[0]}</TotalLabel>
            <TextCell>{total && total[1]}</TextCell>
          </tr>
        ))}
      </tbody>
    </GridTable>
  );
}

function ScheduleView() {
  return (
    <View>
      <DocTabs>
        <DocTab $w={97}>
          <Icon name="cube" size={12} />
          แบบ 3D ห้องพัก
        </DocTab>
        <DocTab $w={174} $active>
          <Icon name="panel" size={13} />
          18 CT, 220 V/380 V, Three P...
          <Icon name="cross" size={10} />
        </DocTab>
        <DocMenu aria-label="Open views">
          <Icon name="menu" size={11} />
        </DocMenu>
      </DocTabs>
      <SheetRow>
        <SheetScroll>
          <Sheet>
            <SheetHead>
              <SheetTitle>Branch Panel:</SheetTitle>
              <FactColumns>
                {facts.map((list, i) => (
                  <Facts key={i}>
                    {list.map(([label, value]) => [
                      <dt key={label}>{label}</dt>,
                      <dd key={`${label}-value`}>{value}</dd>,
                    ])}
                  </Facts>
                ))}
              </FactColumns>
              <SheetNote $h={40}>Notes:</SheetNote>
            </SheetHead>
            <CircuitGrid />
            <LegendBox $h={38}>Legend:</LegendBox>
            <LoadGrid />
          </Sheet>
        </SheetScroll>
        <VScroll $w={12}>
          <Arrow aria-label="Scroll up">
            <Icon name="up" size={8} />
          </Arrow>
          <Track $part={468} $thumb $margin="0 1px" />
          <Track $part={78} />
          <Arrow aria-label="Scroll down">
            <Icon name="down" size={8} />
          </Arrow>
        </VScroll>
      </SheetRow>
      <HScroll>
        <Arrow aria-label="Scroll left">
          <Icon name="left" size={8} />
        </Arrow>
        <Track $part={693} $thumb $margin="1px 0" />
        <Track $part={50} />
        <Arrow aria-label="Scroll right">
          <Icon name="right" size={8} />
        </Arrow>
      </HScroll>
    </View>
  );
}

function ProjectBrowser() {
  return (
    <Browser>
      <PanelHeader>
        Project Browser - HIGHRISE_ELEC_01_R2022
        <CloseBtn aria-label="Close project browser">
          <Icon name="cross" size={10} />
        </CloseBtn>
      </PanelHeader>
      <BrowserBody>
        <Tree>
          {tree.map(([cells, label, icon]) => (
            <TreeRow key={label}>
              {cells.split("").map((kind, i) => (
                <Guide key={i} $kind={kind}>
                  {(kind === "+" || kind === "-") && (
                    <Expander aria-label={`Toggle ${label}`}>
                      <Icon name={kind === "+" ? "plus" : "minus"} size={5} />
                    </Expander>
                  )}
                </Guide>
              ))}
              {icon && <Icon name={icon} size={14} />}
              <TreeLabel $icon={icon} $active={label.startsWith("18 CT")}>
                {label}
              </TreeLabel>
            </TreeRow>
          ))}
        </Tree>
        <VScroll $w={10}>
          <Arrow aria-label="Scroll up">
            <Icon name="up" size={8} />
          </Arrow>
          <Track $part={236} />
          <Track $part={323} $thumb />
          <Arrow aria-label="Scroll down">
            <Icon name="down" size={8} />
          </Arrow>
        </VScroll>
      </BrowserBody>
    </Browser>
  );
}

function Status() {
  return (
    <StatusBar>
      <StatusText>
        Zoom in or out using the Ctrl + mouse wheel or Ctrl + [+/-]. To reset to the original zoom
        level (100%), press Ctrl + 0.
      </StatusText>
      <Icon name="workset" size={14} />
      <Item $gap={5}>
        <SelectBox $w={145} $h={14} $bg="#fff">
          <select aria-label="Active workset" />
          <Icon name="chevron" size={7} />
        </SelectBox>
      </Item>
      <Icon name="brush" size={14} />
      <Item $gap={3}>:0</Item>
      <Item $gap={9}>
        <Icon name="options" size={14} />
      </Item>
      <Icon name="optionsOff" size={13} />
      <Item $gap={3}>
        <SelectBox $w={145} $h={14} $bg="#fff" $color="#999" $size={12}>
          <select aria-label="Design option">
            <option>Main Model</option>
          </select>
          <Icon name="chevron" size={7} />
        </SelectBox>
      </Item>
      <StatusIcons>
        {["selLink", "selUnder", "selPin", "selFace", "selDrag", "gear", "funnel"].map((name) => (
          <Icon key={name} name={name} size={14} />
        ))}
      </StatusIcons>
      :0
      <ZoomLevel>100%</ZoomLevel>
    </StatusBar>
  );
}

function Callouts() {
  return (
    <>
      <RedBox $x={334} $y={136} $w={134} $h={31} />
      <RedBox $x={594} $y={407} $w={217} $h={170} />
      <RedBox $x={-1} $y={495} $w={275} $h={30} />
      <ArrowDrawing width="330" height="50" viewBox="0 0 330 50" aria-hidden="true">
        <path d="M0 37L306 13" stroke="#0a2a66" strokeWidth="2" strokeDasharray="8 5" />
        <path d="M305 5l18 7-16 11z" fill="#0a2a66" />
      </ArrowDrawing>
      <StepBadge $x={479} $y={124}>
        1
      </StepBadge>
      <StepBadge $x={218} $y={483}>
        2
      </StepBadge>
      <Brand>
        <svg width="84" height="80" viewBox="0 0 252 240" fill="currentColor" aria-hidden="true">
          <path d="M94 108A53 53 0 1 1 170 108L160 94A43 47 0 1 0 106 94Z" />
          <path d="M22 80A55 55 0 1 0 102 76A47 47 0 1 1 22 80Z" />
          <path d="M150 152A53 54 0 1 1 228 152L219 138A42 45 0 1 0 161 140Z" />
          <path d="M93 130A52 52 0 1 0 167 130A44 44 0 1 1 93 130Z" />
        </svg>
        SYNERGYSOFT
      </Brand>
    </>
  );
}

function App() {
  return (
    <>
      <GlobalStyle />
      <Frame>
        <Header />
        <RibbonBar />
        <Work>
          <Properties />
          <ScheduleView />
          <ProjectBrowser />
        </Work>
        <Status />
        <Callouts />
      </Frame>
    </>
  );
}

export default App;
